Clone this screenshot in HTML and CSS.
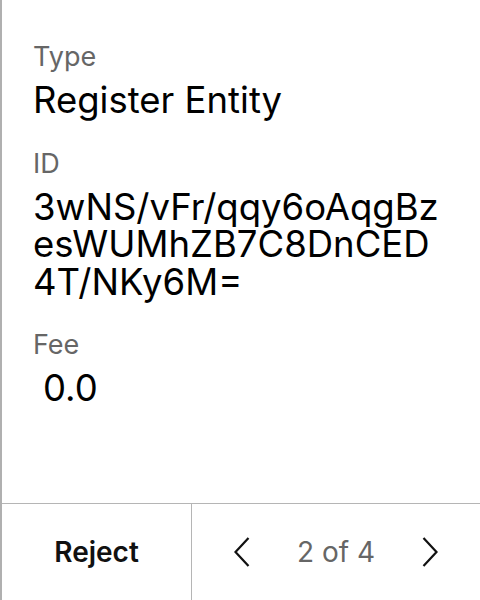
FILE: index.html
```html
<!DOCTYPE html>
<html>
<head>
<meta charset="utf-8">
<link rel="stylesheet" href="styles.css">
</head>
<body>
<div class="screen">
  <div class="details">
    <div class="field">
      <div class="label">Type</div>
      <div class="value">Register Entity</div>
    </div>
    <div class="field">
      <div class="label">ID</div>
      <div class="value id">3wNS/vFr/qqy6oAqgBzesWUMhZB7C8DnCED4T/NKy6M=</div>
    </div>
    <div class="field">
      <div class="label">Fee</div>
      <div class="value fee">0.0</div>
    </div>
  </div>
  <div class="footer">
    <button class="reject">Reject</button>
    <div class="pager">
      <svg class="chev" width="16" height="30" viewBox="0 0 16 30"><path d="M14.5 1 L1.5 15 L14.5 29" fill="none" stroke="#111" stroke-width="2.2"/></svg>
      <span class="count">2 of 4</span>
      <svg class="chev" width="16" height="30" viewBox="0 0 16 30"><path d="M1.5 1 L14.5 15 L1.5 29" fill="none" stroke="#111" stroke-width="2.2"/></svg>
    </div>
  </div>
</div>
</body>
</html>
```
FILE: styles.css
```css
html, body {
  margin: 0;
  padding: 0;
  background: #fff;
}
body {
  font-family: Inter, "Noto Sans", sans-serif;
  color: #000;
}
.screen {
  width: 480px;
  height: 600px;
  box-sizing: border-box;
  border-left: 2px solid #b0b0b0;
  display: flex;
  flex-direction: column;
}
.details {
  flex: 1;
  padding: 41px 0 0 31px;
}
.label {
  font-size: 27px;
  line-height: 32px;
  color: #666;
}
.value {
  font-size: 36.5px;
  line-height: 37.5px;
  margin-top: 9px;
}
.field + .field {
  margin-top: 28px;
}
.id {
  width: 408px;
  word-break: break-all;
}
.fee {
  padding-left: 10px;
}
.footer {
  height: 96px;
  border-top: 1px solid #b5b5b5;
  display: flex;
}
.reject {
  width: 190px;
  border: 0;
  border-right: 1px solid #b5b5b5;
  background: none;
  font-family: inherit;
  font-size: 28px;
  font-weight: 600;
  color: #111;
  padding: 0;
}
.pager {
  flex: 1;
  display: flex;
  align-items: center;
  justify-content: space-between;
  padding: 0 42px;
}
.count {
  font-size: 28px;
  color: #666;
}
```
